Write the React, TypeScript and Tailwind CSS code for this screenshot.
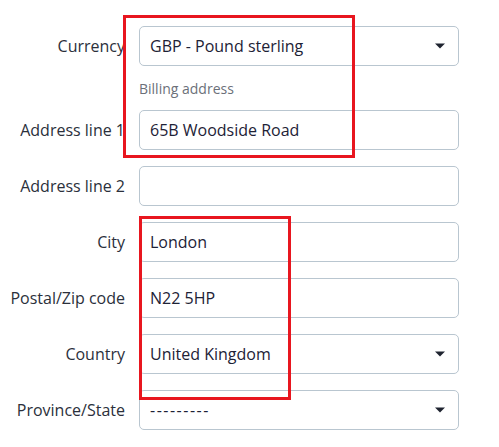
import React from "react";

type Row = {
  label: string;
  value: string;
  select?: boolean;
};

const rows: Row[] = [
  { label: "Address line 1", value: "65B Woodside Road" },
  { label: "Address line 2", value: "" },
  { label: "City", value: "London" },
  { label: "Postal/Zip code", value: "N22 5HP" },
  { label: "Country", value: "United Kingdom", select: true },
  { label: "Province/State", value: "---------", select: true },
];

function Caret() {
  return (
    <svg width="10" height="6" viewBox="0 0 10 6" className="shrink-0">
      <path d="M0 0.5 L10 0.5 L5 5.5 Z" fill="#1f2430" />
    </svg>
  );
}

function Field({ row }: { row: Row }) {
  const dashes = row.value.startsWith("---");
  return (
    <div className="grid grid-cols-[125px_320px] items-center gap-x-[14px]">
      <label className="whitespace-nowrap text-right text-[16px] text-[#2b303b] leading-none">
        {row.label}
      </label>
      <div className="flex h-[40px] items-center justify-between rounded-[5px] border border-[#b9c6d0] bg-white pl-[10px] pr-[13px] text-[16px] text-[#1d2236]">
        <span className={dashes ? "tracking-[1.5px]" : ""}>{row.value}</span>
        {row.select && <Caret />}
      </div>
    </div>
  );
}

export default function App() {
  return (
    <div
      className="relative h-[447px] w-[499px] bg-white"
      style={{ fontFamily: "'Open Sans', 'Noto Sans', sans-serif" }}
    >
      <div className="flex flex-col pt-[26px]">
        <Field row={{ label: "Currency", value: "GBP - Pound sterling", select: true }} />
        <div className="grid grid-cols-[125px_320px] gap-x-[14px] pt-[14px] pb-[13px]">
          <div />
          <p className="text-[14px] leading-[17px] text-[#6b7079]">Billing address</p>
        </div>
        <div className="flex flex-col gap-[16px]">
          {rows.map((row) => (
            <Field key={row.label} row={row} />
          ))}
        </div>
      </div>

      <div className="pointer-events-none absolute left-[123px] top-[15px] h-[143px] w-[232px] border-[3px] border-[#e8161f]" />
      <div className="pointer-events-none absolute left-[139px] top-[216px] h-[184px] w-[152px] border-[3px] border-[#e8161f]" />
    </div>
  );
}
